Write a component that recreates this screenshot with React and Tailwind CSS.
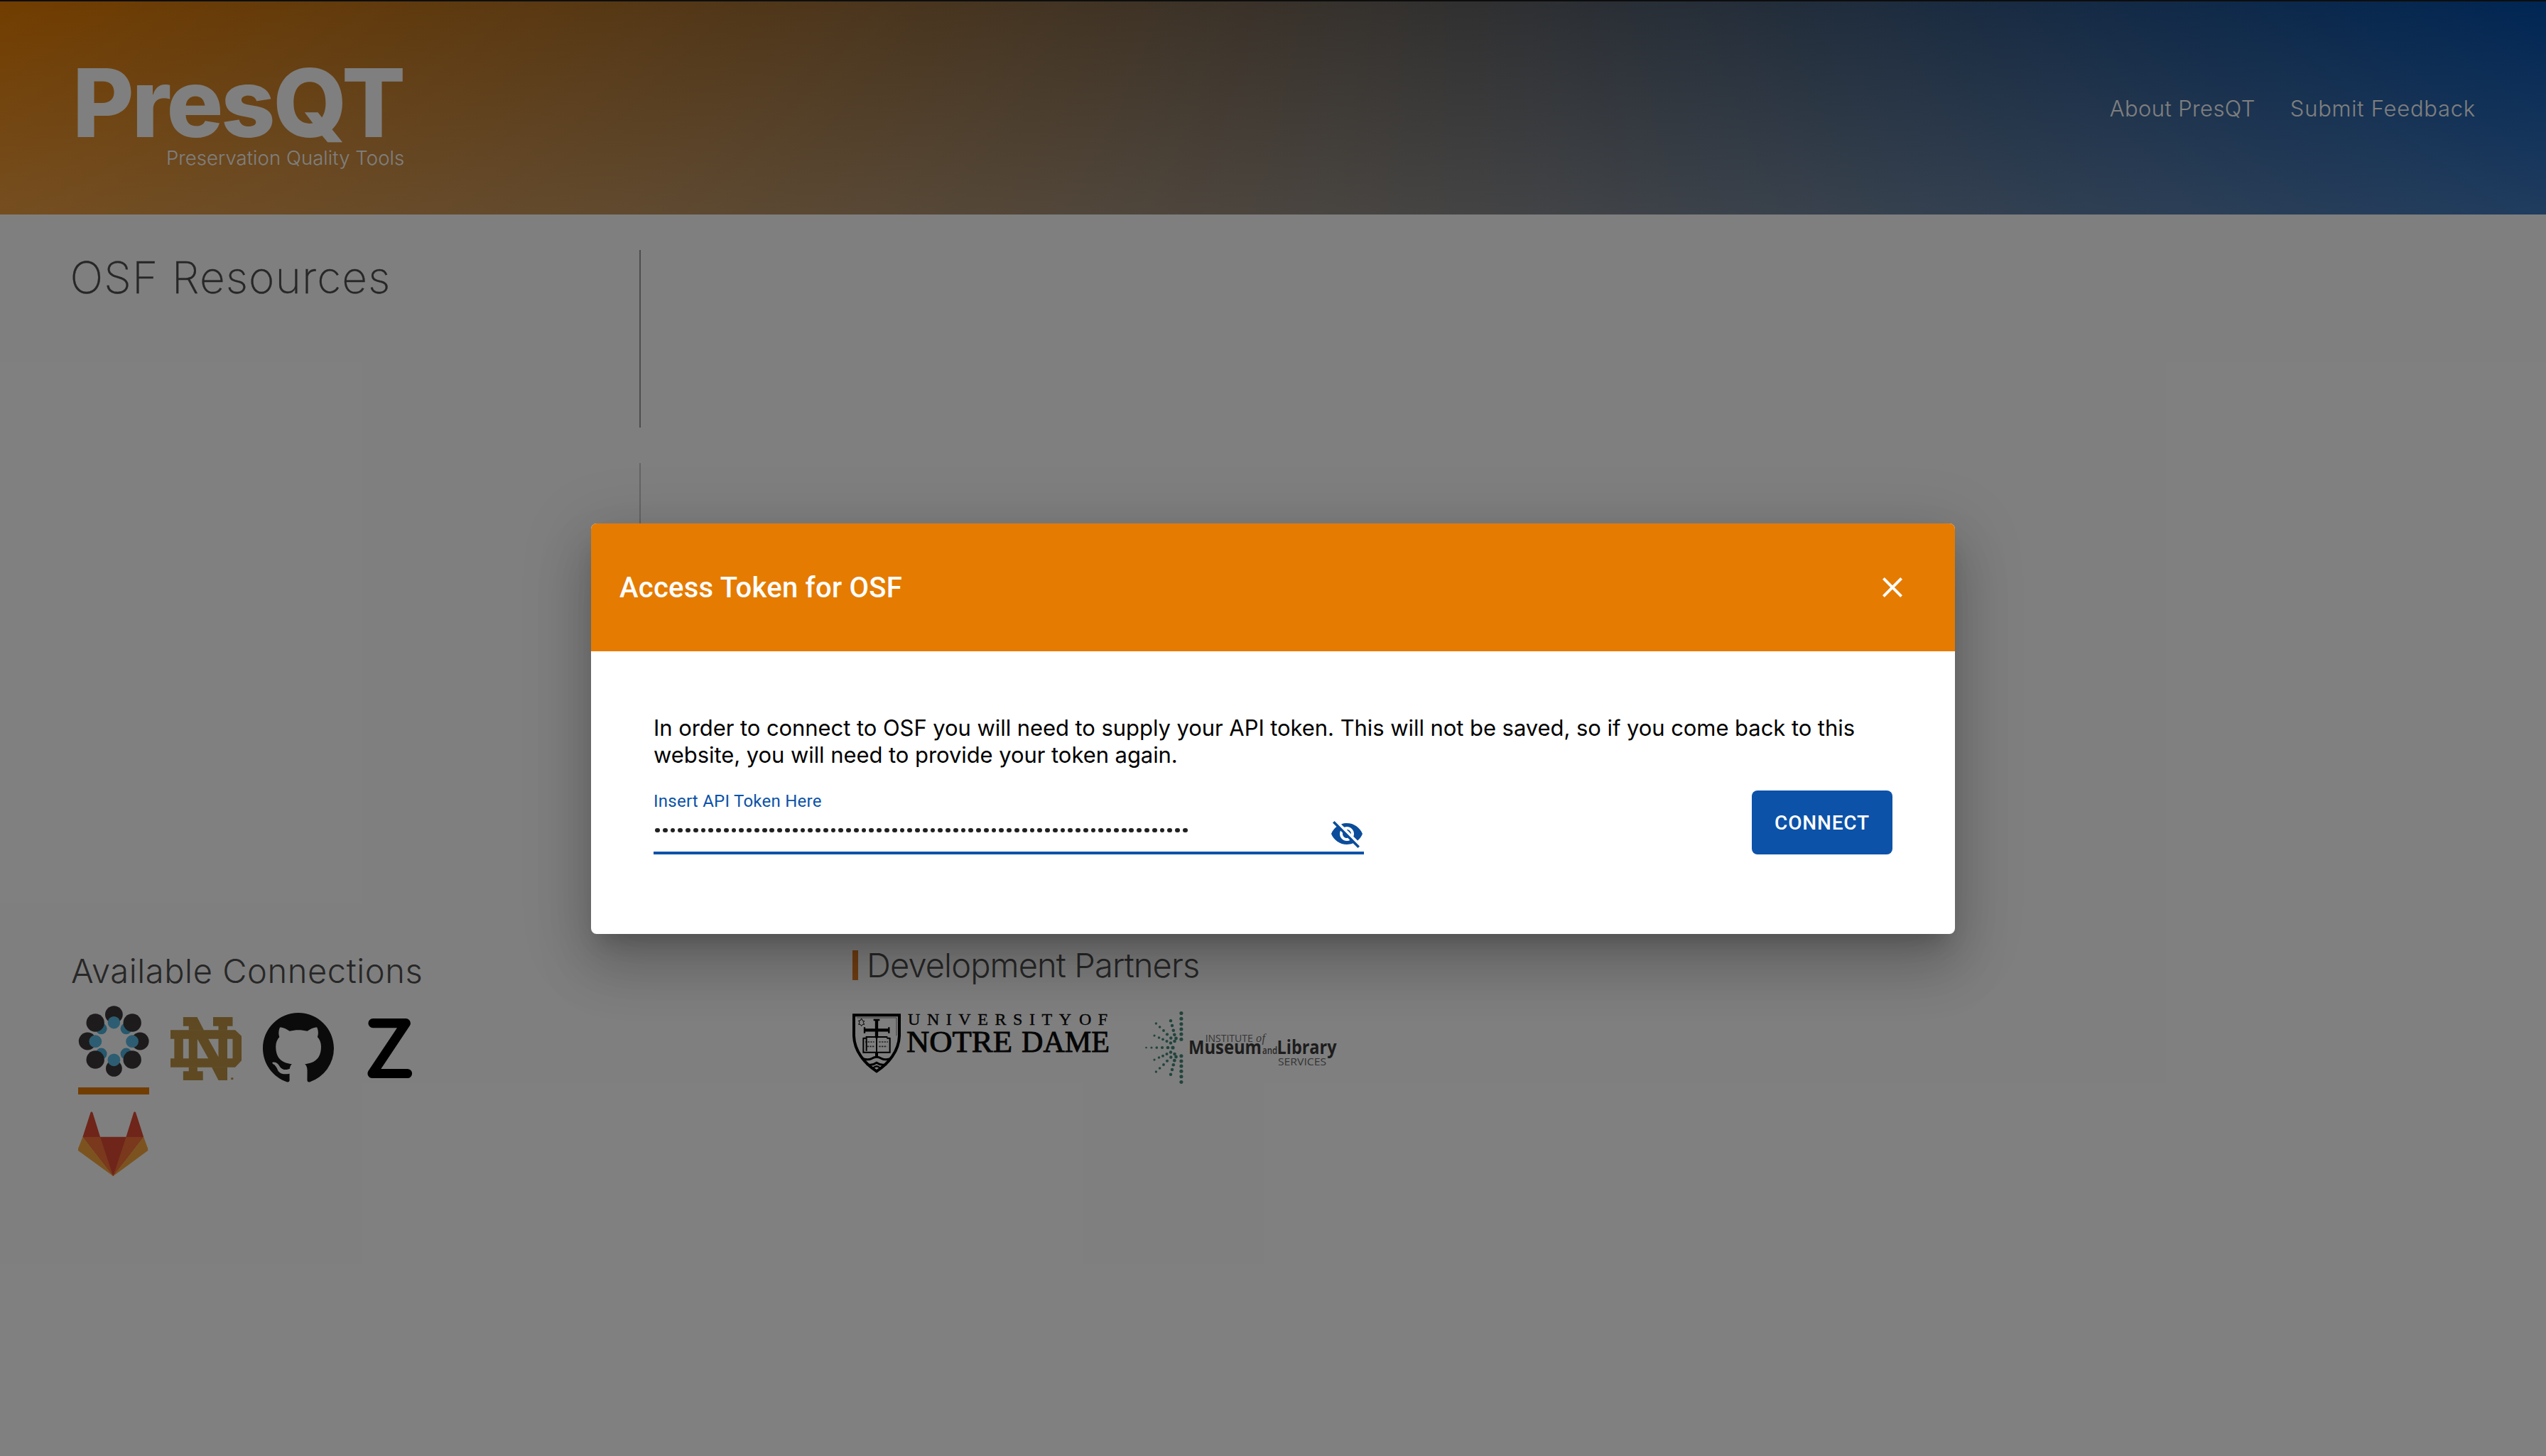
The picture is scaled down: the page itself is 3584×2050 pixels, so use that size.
function OsfLogo() {
  return (
    <svg viewBox="0 0 100 100" className="size-[100px]">
      <g fill="#4fb0dc">
        <circle cx="32.6" cy="32.3" r="8" />
        <circle cx="67.6" cy="32.3" r="8" />
        <circle cx="32.6" cy="67.6" r="8" />
        <circle cx="67.6" cy="67.6" r="8" />
      </g>
      <g fill="#3b3637">
        <ellipse cx="50.4" cy="12.6" rx="12.4" ry="12.4" />
        <circle cx="50.4" cy="88.4" r="11.4" />
        <circle cx="13.2" cy="50" r="12.4" />
        <circle cx="87.2" cy="50" r="12.4" />
        <circle cx="24.2" cy="24" r="12.7" />
        <circle cx="76.2" cy="24" r="12.7" />
        <circle cx="24.2" cy="76" r="12.7" />
        <circle cx="76.2" cy="76" r="12.7" />
      </g>
      <g fill="#5bbbe5">
        <circle cx="50.4" cy="23.7" r="8.7" />
        <circle cx="24.3" cy="50.2" r="8.9" />
        <circle cx="76.1" cy="50.2" r="8.9" />
        <circle cx="50.4" cy="76.3" r="8.9" />
      </g>
    </svg>
  )
}

function NotreDameMonogram() {
  return (
    <svg viewBox="448 288 280 300" preserveAspectRatio="none" className="size-[100px] overflow-visible" fill="#bc9344">
      <path d="M448 391H703L728 416V520L703 548H448V511H463V428H448Z M498 428V511H520V428Z M554 428V511H597Z M597 428L637 505V428Z M672 428V511H693V428Z" fillRule="evenodd" />
      <path d="M498 336H553L580 392H520V374H498Z" />
      <path d="M616 336H693V374H672V392H637V374H616Z" />
      <path d="M520 547H554V565H576V603H498V565H520Z" />
      <path d="M610 547H672V603H637Z" />
      <circle cx="691" cy="596" r="5" />
    </svg>
  )
}

function GithubLogo() {
  return (
    <svg viewBox="0 0 16 16" className="mt-[10px] size-[100px]" fill="#161616">
      <path d="M8 0C3.58 0 0 3.58 0 8c0 3.54 2.29 6.53 5.47 7.59.4.07.55-.17.55-.38 0-.19-.01-.82-.01-1.49-2.01.37-2.53-.49-2.69-.94-.09-.23-.48-.94-.82-1.13-.28-.15-.68-.52-.01-.53.63-.01 1.08.58 1.23.82.72 1.21 1.87.87 2.33.66.07-.52.28-.87.51-1.07-1.78-.2-3.64-.89-3.64-3.95 0-.87.31-1.59.82-2.15-.08-.2-.36-1.02.08-2.12 0 0 .67-.21 2.2.82.64-.18 1.32-.27 2-.27.68 0 1.36.09 2 .27 1.53-1.04 2.2-.82 2.2-.82.44 1.1.16 1.92.08 2.12.51.56.82 1.27.82 2.15 0 3.07-1.87 3.75-3.65 3.95.29.25.54.73.54 1.48 0 1.07-.01 1.93-.01 2.2 0 .21.15.46.55.38A8.013 8.013 0 0016 8c0-4.42-3.58-8-8-8z" />
    </svg>
  )
}

function ZenodoLogo() {
  return (
    <svg viewBox="0 0 100 100" className="size-[100px] overflow-visible">
      <polyline points="25,24.7 71.3,24.7 24,95.5 73.5,95.5" fill="none" stroke="#000" strokeWidth="13.2" strokeLinecap="round" strokeLinejoin="round" />
    </svg>
  )
}

function GitlabLogo() {
  return (
    <svg viewBox="84 723 280 300" preserveAspectRatio="none" className="size-[100px]">
      <path fill="#de4a33" d="M133 739Q137 732 141 739L171 842H273L303 739Q307 732 311 739L342 842L222 1008L102 842Z" />
      <path fill="#f4703a" d="M102 842H171L222 1008ZM342 842H273L222 1008Z" />
      <path fill="#f8a63f" d="M102 842L84 892V900L222 1008ZM342 842L359 892V900L222 1008Z" />
    </svg>
  )
}

function NotreDameWordmark() {
  return (
    <svg viewBox="0 0 364 86" className="h-[86px] w-[364px] overflow-visible">
      <g transform="translate(-10 -12) scale(0.33333)" fill="none" stroke="#000">
        <path strokeWidth="12" d="M36 43H228V130C226 195 182 248 132 280C82 248 38 195 36 130Z" />
        <path strokeWidth="3" d="M48 54H216V130" opacity="0.5" />
        <path strokeWidth="13" d="M132 62V135M80 106H185" />
        <path strokeWidth="7" d="M119 63H145M81 94V119M184 94V119" />
        <path strokeWidth="6" d="M89 137V135H126L132 139L138 135H175V137M76 140H89V194M188 140H175M76 138V200H188V138M132 140V200" />
        <path strokeWidth="5" strokeDasharray="7 4" opacity="0.75" d="M84 156H122M142 156H180M92 175H122M142 175H176" />
        <path strokeWidth="12" d="M132 200V222" />
        <path strokeWidth="9" d="M68 224Q92 236 112 226Q132 214 152 226Q172 236 196 224M90 250Q112 258 132 244Q152 258 174 250" />
        <path strokeWidth="7" d="M118 266Q132 252 146 266" />
        <path strokeWidth="3" d="M68 57L74 68H80L76 74L80 82H73L68 89L63 82H56L60 74L56 66H63Z" />
      </g>
      <g fill="#0a0a0a" stroke="#0a0a0a" strokeWidth="0.4" className="font-['Liberation_Serif',serif]">
        <text x="78" y="15.7" fontSize="24" textLength="230">UNIVERSITY</text>
        <text x="319" y="15.7" fontSize="24" textLength="40">OF</text>
        <g strokeWidth="0.9">
          <text x="76" y="54" fontSize="42" textLength="149" lengthAdjust="spacingAndGlyphs">NOTRE</text>
          <text x="238" y="54" fontSize="42" textLength="124" lengthAdjust="spacingAndGlyphs">DAME</text>
        </g>
      </g>
    </svg>
  )
}

// One entry per ray of the upper half, listed from the tip inwards.
const rays = [
  [[50.9, 1.5], [50.9, 9.3], [50.9, 16.7], [50.9, 24], [50.9, 31], [50.9, 38.3]],
  [[36, 12.3], [38, 19], [39.8, 25.7], [41.3, 31.8], [43.5, 37]],
  [[15.4, 16], [20.6, 21], [26, 26], [31, 31.3], [36.3, 36.5], [41.5, 41]],
  [[13, 33], [19.5, 36], [25, 38.3], [30.5, 41], [36, 43.5]],
]
const axis = [[1.5, 50], [9, 50], [16.3, 50], [24, 50], [32, 50], [39, 50]]

function ImlsLogo() {
  return (
    <svg viewBox="0 0 278 100" className="h-[100px] w-[278px] overflow-visible">
      <g fill="#45897a">
        {rays.flat().map(([x, y], i) => (
          <g key={i}>
            <circle cx={x} cy={y} r={1.3 + x / 40} />
            <circle cx={x} cy={100 - y} r={1.3 + x / 40} />
          </g>
        ))}
        {axis.map(([x, y], i) => (
          <circle key={i} cx={x} cy={y} r={1.3 + x / 30} />
        ))}
      </g>
      <g className="font-['Open_Sans',sans-serif] font-normal">
        <text x="84.7" y="41.5" fontSize="15" fill="#6a6a6a" textLength="67" lengthAdjust="spacingAndGlyphs">INSTITUTE</text>
        <text x="156" y="41.5" fontSize="16" fill="#6a6a6a" className="font-['Liberation_Serif',serif] italic" textLength="13">of</text>
        <text x="61" y="59" fontSize="26" fill="#3a3a3a" className="font-bold" textLength="103" lengthAdjust="spacingAndGlyphs">Museum</text>
        <text x="165" y="59" fontSize="15" fill="#505050" className="font-semibold" textLength="21" lengthAdjust="spacingAndGlyphs">and</text>
        <text x="185.5" y="59" fontSize="26" fill="#3a3a3a" className="font-bold" textLength="84" lengthAdjust="spacingAndGlyphs">Library</text>
        <text x="187" y="74.5" fontSize="15" fill="#6a6a6a" textLength="68" lengthAdjust="spacingAndGlyphs">SERVICES</text>
      </g>
    </svg>
  )
}

function CloseIcon() {
  return (
    <svg viewBox="0 0 24 24" className="size-12" fill="#fff">
      <path d="M19 6.41L17.59 5 12 10.59 6.41 5 5 6.41 10.59 12 5 17.59 6.41 19 12 13.41 17.59 19 19 17.59 13.41 12z" />
    </svg>
  )
}

function VisibilityOffIcon() {
  return (
    <svg viewBox="0 0 24 24" className="size-12" fill="#0b4d9b">
      <path d="M12 7c2.76 0 5 2.24 5 5 0 .65-.13 1.26-.36 1.83l2.92 2.92c1.51-1.26 2.7-2.89 3.43-4.75-1.73-4.39-6-7.5-11-7.5-1.4 0-2.74.25-3.98.7l2.16 2.16C10.74 7.13 11.35 7 12 7zM2 4.27l2.28 2.28.46.46C3.08 8.3 1.78 10.02 1 12c1.73 4.39 6 7.5 11 7.5 1.55 0 3.03-.3 4.38-.84l.42.42L19.73 22 21 20.73 3.27 3 2 4.27zM7.53 9.8l1.55 1.55c-.05.21-.08.43-.08.65 0 1.66 1.34 3 3 3 .22 0 .44-.03.65-.08l1.55 1.55c-.67.33-1.41.53-2.2.53-2.76 0-5-2.24-5-5 0-.79.2-1.53.53-2.2zm4.31-.78l3.15 3.15.02-.16c0-1.66-1.34-3-3-3l-.17.01z" />
    </svg>
  )
}

const connections = [
  { name: 'OSF', Logo: OsfLogo, active: true },
  { name: 'CurateND', Logo: NotreDameMonogram },
  { name: 'GitHub', Logo: GithubLogo },
  { name: 'Zenodo', Logo: ZenodoLogo },
  { name: 'GitLab', Logo: GitlabLogo },
]

function Header() {
  return (
    <header className="flex h-[302px] justify-between border-t-2 border-[#1a1a1a] bg-[linear-gradient(to_top,rgba(255,255,255,0.25),rgba(255,255,255,0)),linear-gradient(to_right,#e47b00,#004ca8)] bg-origin-border pr-[99px] pl-[99px] text-white">
      <div className="flex flex-col pt-[79.5px]">
        <div className="ml-[3px] text-[133px] leading-[126px] font-extrabold tracking-[-3.12px]">PresQT</div>
        <div className="ml-[135px] text-[27.5px] leading-[28px] font-light tracking-[0.07px] whitespace-nowrap">Preservation Quality Tools</div>
      </div>
      <nav className="flex items-center gap-[49px] pt-0.5 text-[31px] leading-[38px] font-light">
        <a className="tracking-[0.4px]">About PresQT</a>
        <a className="tracking-[0.74px]">Submit Feedback</a>
      </nav>
    </header>
  )
}

function TokenDialog() {
  return (
    <section className="mt-0.5 flex h-[578px] w-[1920px] flex-col overflow-clip rounded-lg bg-white font-['Roboto',sans-serif] shadow-[0_22px_30px_-14px_rgba(0,0,0,0.2),0_48px_76px_6px_rgba(0,0,0,0.14),0_18px_92px_16px_rgba(0,0,0,0.12)]">
      <div className="flex h-[180px] items-center justify-between bg-[#e57b00] pr-16 pl-10">
        <h2 className="text-[40px] leading-[47px] font-medium tracking-[0.25px] text-white">Access Token for OSF</h2>
        <CloseIcon />
      </div>
      <div className="flex flex-col px-[88px] pt-[89px]">
        <p className="font-['Inter',sans-serif] text-[31px] leading-[38px] tracking-[-0.065px] text-black">
          In order to connect to OSF you will need to supply your API token. This will not be saved, so if you come back to this
          <br />
          website, you will need to provide your token again.
        </p>
        <div className="mt-[31px] flex h-[90px] justify-between">
          <div className="flex w-[1000px] flex-col border-b-4 border-[#0c52a8] pt-px">
            <label className="text-[24px] leading-[28px] tracking-[0.25px] text-[#0c52a8]">Insert API Token Here</label>
            <div className="mt-2 flex h-12 items-center justify-between">
              <div className="mb-[10px] ml-[2px] flex gap-[3.97px]">
                {Array.from({ length: 70 }, (_, i) => (
                  <span key={i} className="size-[6.8px] shrink-0 rounded-full bg-[#212121]" />
                ))}
              </div>
              <VisibilityOffIcon />
            </div>
          </div>
          <button className="w-[198px] rounded-lg bg-[#0c52a8] text-[28px] leading-[33px] font-medium tracking-[0.83px] text-white">CONNECT</button>
        </div>
      </div>
    </section>
  )
}

export default function App() {
  return (
    <div className="relative h-[2050px] w-[3584px] overflow-hidden bg-white font-['Inter',sans-serif]">
      <Header />
      <main className="flex flex-col pt-[50px] pl-[100px] font-light text-[#4e4e4e]">
        <div className="h-[250px] w-[802px] border-r-2 border-[#999] pt-0.5">
          <h1 className="-ml-[1.5px] text-[62px] leading-[73px] font-extralight tracking-[1.08px] [-webkit-text-stroke:0.3px_#4e4e4e]">OSF Resources</h1>
        </div>
        <div className="mt-[50px] h-[600px] w-[802px] border-r-2 border-[#c8c8c8]" />
        <div className="mt-[76px] flex">
          <div className="mt-[10px] w-[1100px]">
            <h2 className="text-[47px] leading-[58px] tracking-[0.58px]">Available Connections</h2>
            <div className="mt-5 ml-[10px] grid grid-cols-[repeat(4,100px)] gap-x-[30px] gap-y-5">
              {connections.map(({ name, Logo, active }) => (
                <div key={name} className="flex h-[125px] flex-col justify-between">
                  <Logo />
                  {active && <div className="h-[10px] bg-[#e57b00]" />}
                </div>
              ))}
            </div>
          </div>
          <div>
            <div className="flex gap-3">
              <div className="mt-[10px] h-[42px] w-2 bg-[#e07a22]" />
              <h2 className="mt-0.5 text-[47px] leading-[58px] tracking-[-0.875px]">Development Partners</h2>
            </div>
            <div className="mt-[37px] flex gap-12">
              <div className="mt-0.5"><NotreDameWordmark /></div>
              <ImlsLogo />
            </div>
          </div>
        </div>
      </main>
      <div className="absolute inset-0 flex items-center justify-center bg-black/50">
        <TokenDialog />
      </div>
    </div>
  )
}
